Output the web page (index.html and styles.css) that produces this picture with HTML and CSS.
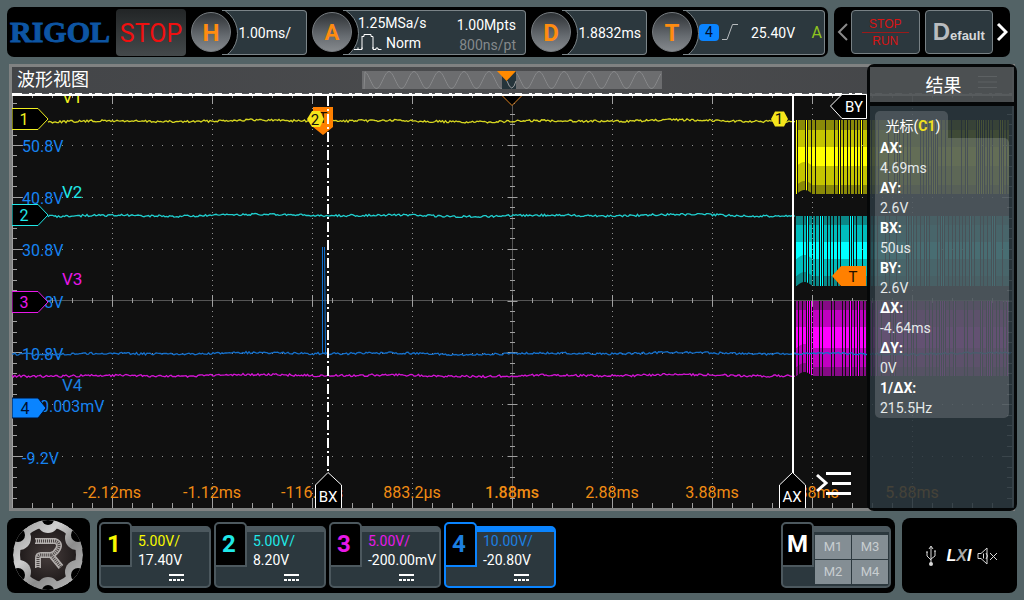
FILE: index.html
```html
<!DOCTYPE html>
<html lang="zh-CN">
<head>
<meta charset="utf-8">
<title>RIGOL</title>
<link rel="stylesheet" href="styles.css">
</head>
<body>
<header class="topbar">
  <div class="status">
    <div class="brand">RIGOL</div>
    <button class="run-state" type="button">STOP</button>
    <div class="chip chip-s">
      <button class="knob" type="button">H</button>
      <div class="chip-box timebase"><span>1.00ms/</span></div>
    </div>
    <div class="chip chip-l">
      <button class="knob knob-small" type="button">A</button>
      <div class="chip-box acquire">
        <div class="acquire-col">
          <span>1.25MSa/s</span>
          <span class="mode"><svg class="pulse" viewBox="0 0 28 18"><path d="M0 16.500h4v-2M4 16.500h4v-2M8 16V3M8 3.500h2v-2h7v2h2V16M19 14v2.500h3v-1.500h2v1.500h3.500"/></svg>Norm</span>
        </div>
        <div class="acquire-col depth">
          <span>1.00Mpts</span>
          <span class="dim">800ns/pt</span>
        </div>
      </div>
    </div>
    <div class="chip chip-s">
      <button class="knob" type="button">D</button>
      <div class="chip-box"><span>1.8832ms</span></div>
    </div>
    <div class="chip chip-m">
      <button class="knob" type="button">T</button>
      <div class="chip-box trigger">
        <span class="source">4</span>
        <svg class="slope" viewBox="0 0 18 20"><path d="M1 17.500h5L11.500 2.500H17"/></svg>
        <span class="level">25.40V</span><span class="auto">A</span>
      </div>
    </div>
  </div>
  <nav class="quick">
    <button class="arrow" type="button" aria-label="Previous"><svg viewBox="0 0 12 20"><path d="M11 2L3 10l8 8"/></svg></button>
    <button class="quick-btn stoprun" type="button"><span>STOP</span><span>RUN</span></button>
    <button class="quick-btn default" type="button"><span class="cap">D</span>efault</button>
    <button class="arrow next" type="button" aria-label="Next"><svg viewBox="0 0 12 20"><path d="M2 2l8 8-8 8"/></svg></button>
  </nav>
</header>

<main class="view">
  <div class="view-title">
    <h1>波形视图</h1>
    <svg class="overview" viewBox="0 0 300 18">
      <rect width="300" height="18" fill="#6c6d6f"/>
      <path id="memory" fill="none" stroke="#88898b"/>
      <rect x="140" width="14" height="18" fill="#25343a"/>
      <path d="M145 10Q150 24 154 10" fill="none" stroke="#9a9c9e"/>
      <path d="M135 0h19l-9.500 10z" fill="#ff8a00"/>
    </svg>
  </div>
  <div class="plot">
    <svg class="graph" viewBox="12 93 1000 415">
      <rect x="12" y="93" width="1000" height="415" fill="#101010"/>
      <g id="grid"></g>
      <path d="M502.500 96L512 105.500L521.500 96" fill="#000" stroke="#d98021"/>
      <g id="bursts"></g>
      <g class="names">
        <text x="62" y="103" fill="#f0f020">V1</text>
        <text x="62" y="198" fill="#20e8e8">V2</text>
        <text x="62" y="285" fill="#e818e8">V3</text>
        <text x="62" y="391" fill="#1c7fe0">V4</text>
      </g>
      <rect x="12" y="93" width="1000" height="3" fill="#fff"/>
      <path d="M22 93.500H1012" stroke="#55585b" stroke-dasharray="7 3 3 7"/>
      <g class="volts">
        <text x="22" y="152">50.8V</text><text x="22" y="204">40.8V</text>
        <text x="22" y="256">30.8V</text><text x="22" y="308">20.8V</text>
        <text x="22" y="360">10.8V</text><text x="22" y="412">800.003mV</text>
        <text x="22" y="464">-9.2V</text>
      </g>
      <g class="times">
        <text x="112" y="498">-2.12ms</text><text x="212" y="498">-1.12ms</text>
        <text x="312" y="498">-116.8µs</text><text x="412" y="498">883.2µs</text>
        <text x="512" y="498" class="strong">1.88ms</text><text x="612" y="498">2.88ms</text>
        <text x="712" y="498">3.88ms</text><text x="812" y="498">4.88ms</text>
        <text x="912" y="498">5.88ms</text>
      </g>
      <g id="traces" fill="none"></g>
      <path d="M322.500 353V247M325.500 353L324.500 247" fill="none" stroke="#0d6fd0"/>
      <path d="M313 107h20v20l-10 8-10-8z" fill="#ff8000"/>
      <text x="323" y="123" class="tag-text" fill="#201000">T</text>
      <path d="M328 96V473" stroke="#fff" stroke-width="2" stroke-dasharray="10 3 2 3"/>
      <path d="M793 96V473" stroke="#fff" stroke-width="2"/>
      <g class="flags">
        <path d="M12 108.500H38L48 119L38 129.500H12z" stroke="#f0f020"/>
        <path d="M12 204.500H38L48 215L38 225.500H12z" stroke="#20e8e8"/>
        <path d="M12 291.500H38L48 302L38 312.500H12z" stroke="#e818e8"/>
        <path d="M12 398H38L46 408L38 418H12z" fill="#0a84ff" stroke="#001030"/>
        <text x="24" y="125" fill="#f0f020">1</text>
        <text x="24" y="221" fill="#20e8e8">2</text>
        <text x="24" y="308" fill="#e818e8">3</text>
        <text x="25" y="414" fill="#001030">4</text>
      </g>
      <path d="M307 119l5-8h8l4 8-4 8h-8zM771 119l4-7.500h9l4 7.500-4 7.500h-9z" fill="#f5e51b"/>
      <text x="315" y="125" class="tag-text" fill="#111">2</text>
      <text x="779" y="124" class="tag-text" fill="#111">1</text>
      <g fill="#000" stroke="#fff">
        <path d="M315.500 508V485L328 472.500L341.500 485V508"/>
        <path d="M779.500 508V485L792.500 472.500L805.500 485V508"/>
        <path d="M866.500 94.500H842L830.500 106L842 118.500H866.500z"/>
      </g>
      <path d="M866 266H841L832 276L841 286H866z" fill="#ff8000"/>
      <text x="328" y="502" class="tag-text" fill="#fff">BX</text>
      <text x="792" y="502" class="tag-text" fill="#fff">AX</text>
      <text x="854" y="112" class="tag-text" fill="#fff">BY</text>
      <text x="853" y="282" class="tag-text" fill="#201000">T</text>
    </svg>
    <button class="drawer" type="button" aria-label="Menu"><svg viewBox="0 0 36 28"><path d="M10 4.500H35M16 14.500H35M10 24.500H35M1 6l9 8-9 8"/></svg></button>
  </div>

  <aside class="results">
    <div class="results-head"><h2>结果</h2><svg viewBox="0 0 20 14"><path d="M0 1.500h19M0 7h19M0 12.500h19"/></svg></div>
    <div class="results-body">
      <div class="tab">光标(<b>C1</b>)</div>
      <dl class="measures">
        <dt>AX:</dt><dd>4.69ms</dd>
        <dt>AY:</dt><dd>2.6V</dd>
        <dt>BX:</dt><dd>50us</dd>
        <dt>BY:</dt><dd>2.6V</dd>
        <dt>ΔX:</dt><dd>-4.64ms</dd>
        <dt>ΔY:</dt><dd>0V</dd>
        <dt>1/ΔX:</dt><dd>215.5Hz</dd>
      </dl>
    </div>
  </aside>
</main>

<footer class="bottombar">
  <button class="home" type="button" aria-label="Home">
    <svg viewBox="0 0 83 75">
      <defs>
        <linearGradient id="steel" gradientUnits="userSpaceOnUse" x1="6" y1="2" x2="76" y2="72"><stop offset="0" stop-color="#8f8f8f"/><stop offset=".35" stop-color="#cfcfcf"/><stop offset=".6" stop-color="#8c8c8c"/><stop offset="1" stop-color="#c4c4c4"/></linearGradient>
        <radialGradient id="core"><stop offset="0" stop-color="#463d3c"/><stop offset="1" stop-color="#211c1c"/></radialGradient>
        <clipPath id="disc"><circle cx="41" cy="37" r="35"/></clipPath>
      </defs>
      <g clip-path="url(#disc)">
        <circle cx="41" cy="37" r="35" fill="url(#steel)"/>
        <circle cx="41" cy="37" r="28" fill="url(#core)"/>
        <g fill="url(#steel)"><circle cx="41" cy="4" r="11"/><circle cx="41" cy="70" r="11"/><circle cx="12" cy="20" r="12"/><circle cx="70" cy="20" r="12"/><circle cx="12" cy="54" r="12"/><circle cx="70" cy="54" r="12"/></g>
        <g fill="#000"><circle cx="41" cy="1" r="6"/><circle cx="41" cy="73" r="6"/><circle cx="11" cy="17" r="7"/><circle cx="71" cy="17" r="7"/><circle cx="11" cy="57" r="7"/><circle cx="71" cy="57" r="7"/></g>
      </g>
      <g fill="none">
        <path d="M28 23H48Q54 25 51 31Q48 36 44 37L54 49" stroke="#b3afad" stroke-width="6"/>
        <path d="M31 50V40Q31 37 34 37H44" stroke="#b3afad" stroke-width="6"/>
        <path d="M28 23H48Q54 25 51 31Q48 36 44 37L54 49M31 50V40Q31 37 34 37H44" stroke="#4b4544" stroke-width="3" stroke-dasharray="1 1"/>
      </g>
    </svg>
  </button>
  <div class="channels">
    <button class="channel ch1" type="button"><span class="num">1</span><span class="scale">5.00V/</span><span class="offset">17.40V</span><i class="dc"></i></button>
    <button class="channel ch2" type="button"><span class="num">2</span><span class="scale">5.00V/</span><span class="offset">8.20V</span><i class="dc"></i></button>
    <button class="channel ch3" type="button"><span class="num">3</span><span class="scale">5.00V/</span><span class="offset">-200.00mV</span><i class="dc"></i></button>
    <button class="channel ch4" type="button"><span class="num">4</span><span class="scale">10.00V/</span><span class="offset">-20.80V</span><i class="dc"></i></button>
    <div class="channel math">
      <span class="num">M</span>
      <div class="math-grid"><button type="button">M1</button><button type="button">M3</button><button type="button">M2</button><button type="button">M4</button></div>
    </div>
  </div>
  <div class="ports">
    <svg class="usb" viewBox="0 0 12 22"><path d="M6 2v17M2 7v4l4 4M10 6v5l-4 3M4 4l2-3 2 3M1 7h2M9 6h2" fill="none" stroke="#d8d8d8"/><circle cx="6" cy="19" r="2" fill="#d8d8d8"/></svg>
    <span class="lxi">L<span>X</span>I</span>
    <svg class="mute" viewBox="0 0 21 18"><path d="M1 6.500h3L10 1v16L4 11.500H1zM6.500 6.500v5M9 6q3 3 0 6M13 6l7 7M20 6l-7 7" fill="none" stroke="#d8d8d8"/></svg>
  </div>
</footer>
<script src="scope.js"></script>
</body>
</html>
```

FILE: styles.css
```css
* { box-sizing: border-box; }
body {
  margin: 0;
  padding: 7px;
  background: #536366;
  color: #fff;
  font: 14px/20px Roboto, "Noto Sans CJK SC", sans-serif;
}
button {
  margin: 0;
  padding: 0;
  border: 0;
  background: none;
  color: inherit;
  font: inherit;
}
svg { display: block; }
h1, h2, dl, dd { margin: 0; font-weight: 400; }

/* top bar */
.topbar { display: flex; gap: 6px; height: 50px; padding-right: 7px; }
.status, .quick {
  display: flex;
  align-items: center;
  background: #000;
  border-radius: 7px;
}
.status { flex: 1; gap: 5px; padding: 0 3px; }
.brand {
  width: 101px;
  color: #0d55a3;
  font: bold 30px/52px "Liberation Serif", serif;
  -webkit-text-stroke: 1px #0d55a3;
}
.run-state {
  width: 70px;
  height: 47px;
  padding-top: 4px;
  border-radius: 4px;
  background: linear-gradient(#222526, #44494b);
  color: #f01010;
  font-size: 25px;
}
.chip { display: flex; align-items: center; }
.chip-s { flex: 1 1 116px; }
.chip-l { flex: 1 1 214px; }
.chip-m { flex: 1 1 173px; }
.knob {
  position: relative;
  z-index: 1;
  flex: none;
  width: 40px;
  height: 40px;
  padding-top: 2px;
  border: 1px solid #777c80;
  border-radius: 50%;
  background: linear-gradient(#2e3235, #666b70 60%, #85898d);
  color: #ff8c10;
  font-size: 24px;
  font-weight: 700;
}
.knob-small { font-size: 22px; }
.chip-box {
  position: relative;
  display: flex;
  flex: 1;
  align-items: center;
  justify-content: flex-end;
  height: 45px;
  margin-left: -9px;
  padding: 2px 5px 0 16px;
  overflow: hidden;
  border: 1px solid #7b8488;
  border-left: 0;
  border-radius: 0 4px 4px 0;
  background: #2c383e;
}
.timebase { padding-right: 15px; }
.chip-box::before {
  content: "";
  position: absolute;
  top: -5px;
  left: -39px;
  width: 53px;
  height: 53px;
  border: 1px solid #7b8488;
  border-radius: 50%;
  background: #000;
}
.chip-box span { position: relative; }
.acquire {
  align-items: flex-start;
  justify-content: space-between;
  padding-top: 2px;
  padding-right: 9px;
  padding-left: 15px;
}
.acquire-col { display: flex; flex-direction: column; }
.depth { padding-top: 2px; text-align: right; }
.mode { display: flex; gap: 4px; }
.pulse { width: 28px; height: 18px; margin-left: -4px; fill: none; stroke: #fff; }
.dim { color: #84898c; }
.trigger { justify-content: flex-start; padding-top: 0; padding-right: 2px; }
.source {
  width: 20px;
  border-radius: 4px;
  background: #0a84ff;
  color: #001030;
  line-height: 17px;
  text-align: center;
}
.slope { width: 18px; height: 20px; margin-left: 2px; fill: none; stroke: #b8bcbe; }
.level { margin-left: 12px; padding-top: 2px; }
.auto { margin-left: auto; padding-top: 2px; color: #8fc31f; font-size: 16px; }
.quick { width: 176px; padding: 0 2px; gap: 3px; }
.arrow { flex: none; width: 12px; }
.arrow svg { width: 12px; height: 20px; fill: none; stroke: #8a8a8a; stroke-width: 2; }
.arrow.next svg { stroke: #fff; stroke-width: 3; }
.quick-btn {
  flex: 1 1 0;
  min-width: 0;
  height: 44px;
  border: 1px solid #788185;
  border-radius: 4px;
  background: #2c383e;
  font-family: "Liberation Sans", sans-serif;
}
.stoprun { margin-right: 2px; color: #d81414; font-size: 12px; line-height: 16px; }
.stoprun span { display: block; margin: 0 10px; }
.stoprun span + span { border-top: 1px solid #9a1a1a; }
.default { padding-top: 4px; color: #d5d8da; font-size: 13px; font-weight: 700; }
.cap { color: #b9bcbf; font-size: 24px; }

/* waveform view */
.view {
  position: relative;
  margin: 7px 2px;
  border: 3px solid #808282;
}
.view-title {
  display: flex;
  align-items: center;
  justify-content: center;
  height: 26px;
  padding-right: 6px;
  background: linear-gradient(90deg, #434548, #4b4c4e 50%, #434548);
}
.view-title h1 { flex: 1; padding-left: 5px; font-size: 18px; line-height: 28px; }
.view-title::after { content: ""; flex: 1; }
.overview { flex: none; width: 30%; min-width: 300px; }
.plot { position: relative; }
.graph { width: 100%; font-size: 16px; }
.names { font-size: 17px; }
.volts { fill: #1683f0; }
.times { fill: #f08c14; text-anchor: middle; }
.strong { font-weight: 500; }
.flags { fill: #000; font-size: 16px; text-anchor: middle; }
.tag-text { font-size: 15px; text-anchor: middle; }
.drawer { position: absolute; right: 160px; bottom: 11px; }
.drawer svg { width: 36px; height: 28px; fill: none; stroke: #fff; stroke-width: 3; }

/* results panel */
.results {
  position: absolute;
  top: -3px;
  right: -5px;
  bottom: -3px;
  display: flex;
  flex-direction: column;
  width: 150px;
  border: 3px solid #050708;
  border-radius: 7px;
}
.results-head {
  position: relative;
  height: 39px;
  border-bottom: 4px solid #050708;
  background: rgba(77, 81, 83, .94);
  text-align: center;
}
.results-head h2 { font-size: 18px; line-height: 37px; padding-left: 3px; }
.results-head svg {
  position: absolute;
  top: 8px;
  right: 16px;
  width: 20px;
  height: 14px;
  stroke: #5d6163;
}
.results-body { flex: 1; padding: 5px 5px 0; background: rgba(42, 55, 62, .87); }
.tab {
  width: 73px;
  height: 27px;
  padding: 5px 0 0 3px;
  border-radius: 5px 5px 0 0;
  background: rgba(255, 255, 255, .16);
  text-align: center;
}
.tab b { color: #f0e020; }
.measures {
  padding-left: 5px;
  border-radius: 0 5px 5px 5px;
  background: rgba(255, 255, 255, .16);
  color: #e6eaea;
}
.measures dt { color: #fff; font-weight: 700; }

/* bottom bar */
.bottombar { display: flex; gap: 7px; height: 75px; }
.home, .channels, .ports { border-radius: 8px; background: #000; }
.home { width: 83px; }
.channels {
  display: flex;
  flex: 1;
  gap: 3px;
  padding: 4px 4px 4px 2px;
}
.channel {
  position: relative;
  display: flex;
  flex-direction: column;
  align-items: flex-start;
  width: 112px;
  height: 62px;
  margin-top: 4px;
  padding-left: 37px;
  border: 2px solid #4c585e;
  border-top-width: 6px;
  border-radius: 5px;
  background: #2c383e;
  line-height: 19px;
  text-align: left;
}
.num {
  position: absolute;
  top: -10px;
  left: -2px;
  width: 33px;
  height: 45px;
  padding-left: 6px;
  border: 2px solid #4c585e;
  border-radius: 5px 5px 0 0;
  background: #000;
  font-size: 24px;
  font-weight: 700;
  line-height: 40px;
}
.channel .scale, .channel .offset { white-space: nowrap; }
.dc {
  width: 15px;
  height: 7px;
  margin: 4px 0 0 31px;
  border-top: 2px solid #fff;
  background: repeating-linear-gradient(90deg, #fff 0 3px, transparent 3px 4px) 0 100% / 100% 2px no-repeat;
}
.ch1 .num, .ch1 .scale { color: #f8f800; }
.ch2 .num, .ch2 .scale { color: #20e8e8; }
.ch3 .num, .ch3 .scale { color: #e818e8; }
.ch4 .num, .ch4 .scale { color: #1c7fe0; }
.ch4, .ch4 .num { border-color: #0a84ff; }
.math { width: 110px; margin-left: auto; padding: 3px 1px 2px 32px; }
.math .num { padding-left: 4px; }
.math-grid { display: grid; grid-template-columns: 1fr 1fr; gap: 1px; width: 100%; height: 49px; }
.math-grid button { background: #848e94; color: #c8cdd0; font-size: 13px; line-height: 22px; }
.ports {
  display: flex;
  align-items: center;
  justify-content: center;
  gap: 6px;
  width: 115px;
  padding-left: 4px;
}
.usb { width: 12px; height: 22px; }
.lxi {
  padding-left: 4px;
  font: italic bold 16px/20px "Liberation Sans", sans-serif;
}
.lxi span { color: #a8a8a8; }
.mute { width: 21px; height: 18px; }
```

FILE: scope.js
```js
const NS = "http://www.w3.org/2000/svg";
let seed = 7;
const rnd = () => (seed = (seed * 1103515245 + 12345) % 2147483648) / 2147483648;

function path(parent, d, attrs) {
  const p = document.createElementNS(NS, "path");
  p.setAttribute("d", d);
  for (const k in attrs) p.setAttribute(k, attrs[k]);
  document.getElementById(parent).appendChild(p);
}

// graticule
let dots = "", ticks = "";
const top0 = 93, bottom = 508, left = 12;
for (let i = 1; i < 10; i++) {
  const x = left + i * 100;
  if (i !== 5) for (let y = top0 + 5; y < bottom; y += 5.2) dots += `M${x} ${Math.round(y) + .5}h1`;
}
for (let j = 1; j < 8; j++) {
  const y = Math.round(top0 + j * 51.9) + .5;
  if (j !== 4) for (let x = left + 10; x < 1012; x += 10) dots += `M${x} ${y}h1`;
}
for (let i = 1; i < 50; i++) {
  const x = left + i * 20 + .5, big = i % 5 === 0;
  ticks += `M${x} ${big ? 295 : 298}v${big ? 11 : 5}M${x} 508v${big ? -10 : -5}M${x} 96v${big ? 8 : 2}`;
}
for (let j = 1; j < 40; j++) {
  const y = Math.round(top0 + j * 10.375) + .5, w = j % 5 ? 5 : 10;
  ticks += `M12 ${y}h${w}M${512.5 - w / 2} ${y}h${w}M1012 ${y}h-${w}`;
}
path("grid", dots, { stroke: "#909090" });
path("grid", "M12 300.5H1012M512.5 96V508", { stroke: "#555" });
path("grid", ticks + "M12.5 508V96", { stroke: "#a0a0a0" });

// resting traces
function trace(y, color, x0, x1) {
  let d = "";
  for (let x = x0; x < x1; x += 1.5) {
    const v = y + Math.sin(x / 23) * .6 + Math.sin(x / 61) * .5 + (rnd() - .5) * 2.2;
    d += (d ? "L" : "M") + x + " " + v.toFixed(1);
  }
  path("traces", d, { stroke: color, "stroke-width": 1.3 });
}
trace(121, "#d8d820", 48, 796);
trace(215.5, "#20cfcf", 48, 796);
trace(375.5, "#d414d4", 12, 796);
trace(353.5, "#1470cc", 12, 1012);

// switching bursts: nested amplitude bands split by narrow gaps
function burst(bands, colors) {
  const d = ["", "", ""];
  let x = 796;
  while (x < 1009) {
    const wide = rnd() < .2;
    const run = wide ? 5 + Math.floor(rnd() * 5) : 1 + Math.floor(rnd() * 3);
    for (let i = 0; i < run && x < 1009; i++, x++) {
      const rise = x < 812 ? 4 * Math.sin((x - 796) / 16 * Math.PI) : 0;
      const low = bands[0][1] - rise;
      if (!wide && run === 1) {
        d[2] += `M${x + .5} ${bands[0][0]}V${low}`;
      } else {
        d[0] += `M${x + .5} ${bands[0][0]}V${low}`;
        d[1] += `M${x + .5} ${bands[1][0]}V${bands[1][1] - rise}`;
        d[2] += `M${x + .5} ${bands[2][0]}V${bands[2][1] - rise}`;
      }
    }
    x++;
  }
  d.forEach((s, i) => path("bursts", s, { stroke: colors[i] }));
}
burst([[120, 194], [130, 185], [147, 166]], ["#8a8a08", "#c4c400", "#ffff00"]);
burst([[216, 286], [225, 276], [242, 259]], ["#0a8888", "#00bcbc", "#00ffff"]);
burst([[301, 376], [310, 367], [327, 348]], ["#860a86", "#c000c0", "#ff00ff"]);

// memory overview
let m = "M2 18";
for (let x = 3; x < 300; x++) m += `L${x} ${(9 + 8.5 * Math.cos((x - 2) / 25 * 2 * Math.PI + Math.PI)).toFixed(1)}`;
document.getElementById("memory").setAttribute("d", m);
```
